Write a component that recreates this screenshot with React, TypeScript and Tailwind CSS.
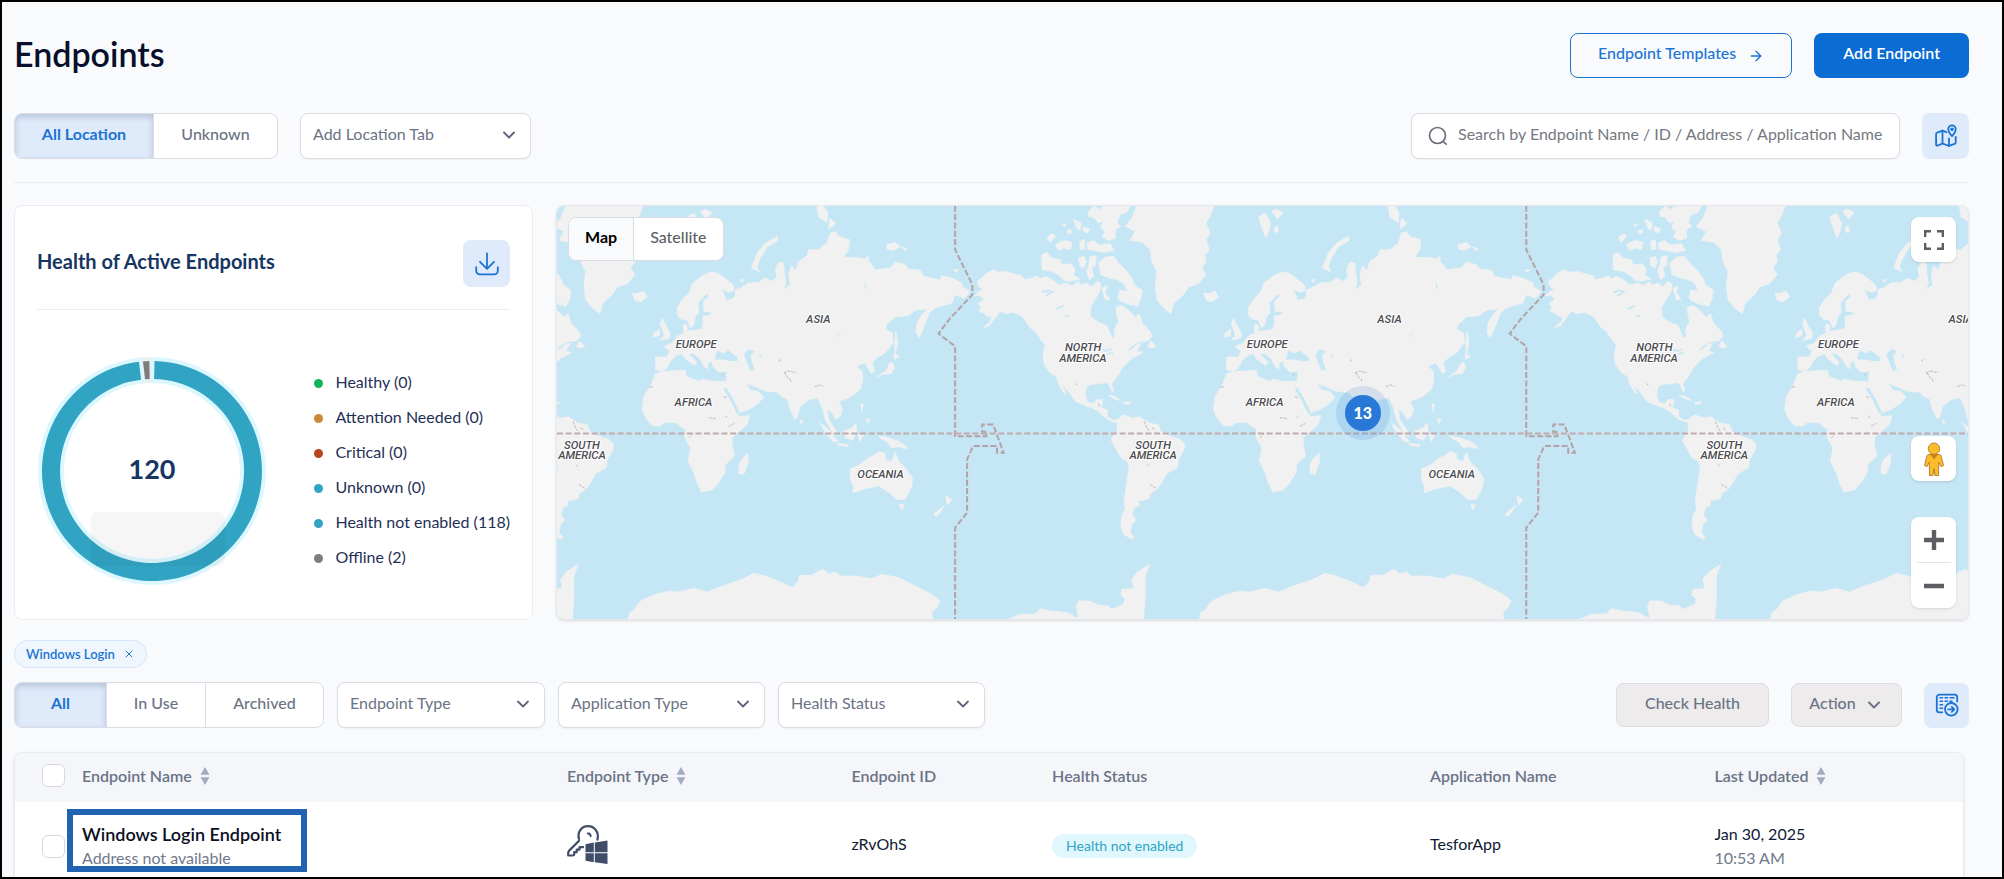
import React, { useState } from 'react';
import { ArrowRight, ChevronDown, X } from 'lucide-react';

interface HealthItem {
  label: string;
  count: number;
  dot: string;
}

interface Endpoint {
  name: string;
  address: string;
  endpointId: string;
  health: string;
  application: string;
  date: string;
  time: string;
}

const healthItems: HealthItem[] = [
  { label: 'Healthy', count: 0, dot: 'bg-[#12b35a]' },
  { label: 'Attention Needed', count: 0, dot: 'bg-[#cc8a37]' },
  { label: 'Critical', count: 0, dot: 'bg-[#b5451b]' },
  { label: 'Unknown', count: 0, dot: 'bg-[#31a4c4]' },
  { label: 'Health not enabled', count: 118, dot: 'bg-[#31a4c4]' },
  { label: 'Offline', count: 2, dot: 'bg-[#7d7d7d]' },
];

const endpoints: Endpoint[] = [
  {
    name: 'Windows Login Endpoint',
    address: 'Address not available',
    endpointId: 'zRvOhS',
    health: 'Health not enabled',
    application: 'TesforApp',
    date: 'Jan 30, 2025',
    time: '10:53 AM',
  },
];

/* ---------- icons ---------- */

const SearchIcon = () => (
  <svg className="h-5 w-5 shrink-0 text-[#6b6f7b]" viewBox="0 0 20 20" fill="none" stroke="currentColor" strokeWidth={1.7} strokeLinecap="round">
    <circle cx="9.5" cy="9.5" r="8" />
    <path d="M15.2 15.6l3 2.6" />
  </svg>
);

const MapPinIcon = () => (
  <svg className="h-6 w-6" viewBox="0 0 24 24" fill="none" stroke="currentColor" strokeWidth={1.8} strokeLinecap="round" strokeLinejoin="round">
    <path d="M12.5 8.2L8.5 6.7 3.2 8.6a1.6 1.6 0 0 0-1.1 1.5v10.6c0 .8.7 1.2 1.4.9l5-2.1 6.5 2.4 5.6-2a1.6 1.6 0 0 0 1.1-1.5v-5.6" />
    <path d="M8.5 6.7v12.8M15 14.5v7.4" />
    <path d="M18 1.3a3.7 3.7 0 0 0-3.7 3.7c0 3.2 3.7 7.2 3.7 7.2s3.7-4 3.7-7.2A3.7 3.7 0 0 0 18 1.3z" />
    <circle cx="18" cy="5.2" r="0.9" />
  </svg>
);

const DownloadIcon = () => (
  <svg className="h-6 w-6" viewBox="0 0 24 24" fill="none" stroke="currentColor" strokeWidth={1.8} strokeLinecap="round" strokeLinejoin="round">
    <path d="M12 1.5v15.2M5 9.8l7 7 7-7" />
    <path d="M1.2 15.2v3.6a3.6 3.6 0 0 0 3.6 3.6h14.4a3.6 3.6 0 0 0 3.6-3.6v-3.6" />
  </svg>
);

const TableExportIcon = () => (
  <svg className="h-6 w-6" viewBox="0 0 24 24" fill="none" stroke="currentColor" strokeLinecap="round" strokeLinejoin="round">
    <path strokeWidth={1.8} d="M7.2 19.3H4.4A2.6 2.6 0 0 1 1.8 16.7V4.3A2.6 2.6 0 0 1 4.4 1.7h15.2a2.6 2.6 0 0 1 2.6 2.6v4.2" />
    <path strokeWidth={1.4} strokeLinecap="butt" d="M4.5 4.8h3.6M9.5 4.8h3.6M14.5 4.8h5M4.5 8.3h3.6M9.5 8.3h3.6M14.5 8.3h3M4.5 11.8h3.6M4.5 15.3h3.6" />
    <circle cx="16.3" cy="16.3" r="6.3" strokeWidth={1.8} />
    <path strokeWidth={1.8} d="M13.2 16.3h6M16.8 13.8l2.5 2.5-2.5 2.5" />
  </svg>
);

const SortIcon = () => (
  <svg className="h-5 w-[10px]" viewBox="0 0 10 20" fill="#a3adc2">
    <path d="M5 1l4.5 7.8H.5z" />
    <path d="M5 19L.5 11.2h9z" />
  </svg>
);

const WindowsKeyIcon = () => (
  <svg className="h-[39px] w-[41px]" viewBox="0 0 41 39" fill="none">
    <path
      d="M12 15.8L2.2 25.6A3.6 3.6 0 0 0 1.2 28v2.5h4.7c.8 0 1.3-.5 1.3-1.3v-2h2.5v-2.6h2.8v-2.4h3.6M30.4 14.6c2-7.2-2.9-13.4-9.4-13.4-6.700 0-11 6.300-9 12.800"
      stroke="#3f4d68"
      strokeWidth={2.2}
      strokeLinecap="round"
      strokeLinejoin="round"
    />
    <path d="M20.5 7.5c2.2-.6 4.6 1.4 4 4-.3.9-1.5.9-1.7 0-.2-1.3-.8-1.9-2-2-1.2-.2-1.2-1.7-.3-2z" fill="#3f4d68" />
    <path d="M18.5 19.2l8.3-1.6v9.7h-8.3zM27.8 17.4L40.5 15.5v11.8H27.8zM18.5 28.2h8.3v9l-8.3-1.5zM27.8 28.2h12.7v10.8L27.8 37.3z" fill="#3f4d68" />
  </svg>
);

const PegmanIcon = () => (
  <svg className="h-[34px] w-5" viewBox="0 0 20 34" stroke="#b07a2c" strokeWidth={0.9}>
    <path d="M5 12.5h10c1.5 0 2 .8 2.3 2l2.2 9-2.5 1.2-2.2-4.5-.3 13.3H11l-1-7-1 7H5.5L5.2 20.2 3 24.7.5 23.5l2.2-9c.3-1.2.8-2 2.3-2z" fill="#fbbc2c" />
    <path d="M6 12.5h8l-4 5z" fill="#c98418" stroke="none" />
    <circle cx="10" cy="6.7" r="5.7" fill="#fbbc2c" />
  </svg>
);

/* ---------- small controls ---------- */

interface SegmentedProps {
  label: string;
  options: string[];
  widths: string[];
}

const Segmented: React.FC<SegmentedProps> = ({ label, options, widths }) => {
  const [active, setActive] = useState(options[0]);
  return (
    <div role="group" aria-label={label} className="flex h-[46px] overflow-hidden rounded-lg border border-[#d9dce4] bg-white">
      {options.map((option, index) => (
        <button
          key={option}
          onClick={() => setActive(option)}
          className={`border-r border-[#d9dce4] pb-1 last:border-r-0 ${widths[index]} ${
            option === active
              ? 'bg-[#dfebfb] font-bold text-[#1b74d4] shadow-[inset_0_3px_6px_rgba(30,50,80,0.22)]'
              : 'font-medium text-[#6b7385]'
          }`}
        >
          {option}
        </button>
      ))}
    </div>
  );
};

const Dropdown: React.FC<{ label: string; width: string }> = ({ label, width }) => (
  <div className={`relative ${width}`}>
    <select
      aria-label={label}
      className="h-[46px] w-full appearance-none rounded-lg border border-[#d9dce4] bg-white pr-10 pb-1 pl-3 text-[#6b7385] shadow-xs"
    >
      <option>{label}</option>
    </select>
    <ChevronDown className="pointer-events-none absolute top-3 right-3 h-5 w-5 text-[#5b6478]" strokeWidth={2.2} />
  </div>
);

/* ---------- donut ---------- */

const point = (radius: number, degrees: number) => {
  const angle = ((degrees - 90) * Math.PI) / 180;
  return `${(115 + radius * Math.cos(angle)).toFixed(2)} ${(115 + radius * Math.sin(angle)).toFixed(2)}`;
};

const arc = (start: number, end: number) => {
  const large = end - start > 180 ? 1 : 0;
  return `M${point(110, start)}A110 110 0 ${large} 1 ${point(110, end)}L${point(92, end)}A92 92 0 ${large} 0 ${point(92, start)}Z`;
};

const Donut = () => (
  <div className="relative h-[230px] w-[230px] shrink-0">
    <svg className="h-full w-full" viewBox="0 0 230 230" role="img" aria-label="118 health not enabled, 2 offline">
      <path d={arc(355, 358.6)} fill="#7d7d7d" stroke="#efefef" strokeWidth={8} paintOrder="stroke" />
      <path d={arc(1.3, 353.2)} fill="#31a4c4" stroke="#dcf7fe" strokeWidth={8} paintOrder="stroke" />
      <rect x="54" y="156" width="134" height="54" rx="6" fill="#000" fillOpacity={0.035} />
    </svg>
    <div className="absolute inset-0 flex items-center justify-center pb-1 text-[27px] font-bold text-[#163563]">120</div>
  </div>
);

/* ---------- world map ---------- */

const americas = [
  'M80 245L95 235 105 222 128 210 145 218 165 215 190 222 215 228 222 240 245 235 262 228 268 238 285 230 305 240 325 255 350 250 365 258 385 245 390 256 410 250 425 262 440 245 452 252 448 278 432 302 420 325 422 352 445 368 470 378 480 402 488 418 495 410 492 390 505 365 500 350 498 322 515 318 530 328 545 342 555 352 568 342 576 370 600 395 606 410 592 424 568 426 545 438 528 458 545 448 560 435 574 430 566 445 560 455 578 458 562 468 545 476 530 490 515 505 505 525 492 543 484 553 490 570 487 578 478 560 470 549 445 553 420 555 408 565 406 590 412 608 430 612 440 600 458 600 452 624 472 632 472 652 488 662 502 660 520 646 545 655 570 652 580 660 600 672 625 675 632 695 655 708 690 720 705 735 700 755 685 780 682 805 650 822 635 850 620 870 600 883 598 898 565 905 568 918 552 925 546 945 557 962 545 975 540 1000 552 1015 545 1020 520 1005 512 980 514 950 525 930 522 900 530 850 537 800 530 785 512 775 495 745 483 722 490 708 502 690 500 668 485 666 465 655 445 635 425 625 405 618 375 605 360 582 340 560 318 530 300 520 282 495 278 470 284 435 270 420 255 395 240 385 215 350 190 338 165 342 150 335 130 360 118 378 98 385 120 365 125 352 110 350 100 340 85 335 92 322 82 312 100 300 90 288 72 288 85 275 98 270 85 260Z',
  'M318 530L330 546 348 582 340 580 326 556Z',
  'M475 588L492 590 512 603 495 600Z',
  'M520 608L542 607 535 614 522 613Z',
  'M592 440L602 424 618 440 605 446Z',
  'M560 18L545 55 525 80 555 95 540 122 578 128 600 150 605 185 620 215 615 260 620 300 640 325 662 342 672 310 700 285 715 262 745 252 768 225 755 205 768 185 765 165 778 150 768 120 780 100 768 70 782 45 792 18Z',
  'M760 280L775 282 795 274 805 292 785 306 768 302Z',
  'M445 190L465 172 490 170 505 190 530 215 545 235 552 255 576 272 572 298 560 322 540 305 505 290 508 272 532 275 520 250 500 240 478 235 452 225Z',
  'M275 165L290 158 305 175 330 180 335 195 362 192 375 208 370 225 388 238 360 245 340 242 328 228 305 215 275 210Z',
  'M385 175L402 170 408 185 400 205 388 198ZM420 170L438 168 436 195 425 205 430 230 418 240 408 215 415 200Z',
  'M315 135L332 125 348 122 365 128 360 150 340 145 325 152ZM290 115L305 102 316 108 300 128Z',
  'M388 125L402 120 404 148 390 150ZM410 130L430 122 445 135 480 132 492 152 465 158 430 152 412 148Z',
  'M370 58L392 70 390 92 378 84ZM398 80L418 88 412 100 400 96ZM350 92L364 90 362 102 352 100ZM336 74L348 72 344 80Z',
  'M415 35L432 18 448 30 455 22 478 18 540 18 530 38 510 45 500 68 512 80 495 90 496 115 475 122 455 112 465 95 450 85 460 62 445 70 430 52 415 50Z',
  'M455 265L470 258 465 280 480 300 465 300ZM502 290L530 298 550 318 530 312 508 302Z',
  'M170 1262L210 1245 255 1244 270 1228 300 1235 350 1240 385 1258 378 1222 385 1205 420 1205 445 1218 470 1218 485 1230 520 1215 525 1200 512 1188 515 1170 550 1168 545 1140 560 1120 598 1095 585 1130 585 1200 580 1262Z',
  'M748 1262L752 1240 765 1232 785 1205 830 1185 870 1175 900 1178 945 1167 985 1178 1030 1160 1090 1140 1125 1122 1160 1130 1205 1148 1240 1165 1260 1145 1262 1128 1300 1128 1320 1115 1335 1110 1350 1124 1370 1118 1385 1130 1430 1130 1480 1138 1510 1125 1560 1135 1610 1160 1660 1185 1685 1205 1675 1225 1660 1240 1662 1262Z',
];

const eurasia = [
  'M-40 472L-5 472 2 455 -15 440 10 430 25 410 45 400 42 378 50 372 58 385 52 395 75 393 100 388 103 370 102 350 125 345 130 338 105 335 103 305 120 290 116 282 105 290 88 310 90 340 80 350 75 375 65 385 55 362 35 358 25 345 25 325 40 300 60 280 72 250 105 225 130 216 150 222 175 240 195 258 195 274 180 278 158 268 170 292 172 302 190 298 200 288 200 270 215 265 240 250 270 248 290 235 310 245 325 232 320 210 330 188 345 190 348 225 352 250 345 272 365 255 360 225 368 198 382 212 390 185 415 168 420 150 450 150 475 130 485 100 500 95 510 110 543 120 540 150 525 172 580 175 605 188 620 210 665 205 680 187 710 195 720 208 755 212 765 230 815 240 820 228 850 235 880 250 882 262 905 275 888 296 860 285 850 310 800 325 782 340 765 385 752 414 743 400 745 370 760 345 778 328 740 332 720 348 680 352 655 375 650 388 672 400 674 430 650 460 625 475 610 490 618 515 608 522 595 500 588 490 565 500 580 515 583 540 575 570 550 590 528 600 510 605 522 630 515 650 502 660 490 640 476 628 480 660 500 690 508 708 495 705 470 660 462 628 448 595 420 600 395 620 385 655 378 658 365 630 355 598 340 592 325 578 290 575 260 562 232 552 245 572 268 575 285 593 265 615 240 630 210 640 195 610 180 580 165 555 172 545 175 515 150 518 132 500 130 485 116 490 118 508 105 500 95 480 75 462 58 462 84 488 76 498 50 478 40 462 20 470 5 485 -5 505 -20 516 -40 510Z',
  'M-40 522L-10 515 50 512 52 530 90 545 100 538 130 545 168 545 172 565 185 595 205 635 210 652 243 648 235 675 215 692 190 715 190 735 197 770 170 795 168 820 150 850 130 872 98 878 85 850 75 820 58 785 65 745 48 715 50 690 35 680 20 668 -15 670 -25 680 -50 678 -70 655 -80 630 -75 590 -55 560Z',
  'M210 800L218 780 238 762 238 790 225 825 210 822Z',
  'M248 205L265 160 290 130 325 110 328 122 295 142 275 175 265 200 272 216Z',
  'M55 52L75 40 92 70 86 95 78 115 68 90ZM95 35L108 28 130 38 112 58ZM102 85L112 78 115 96 105 98Z',
  'M445 18L465 18 478 40 475 68 450 52ZM485 55L502 72 480 88Z',
  'M655 135L680 128 695 140 675 152 656 148ZM697 142L717 148 712 153Z',
  'M855 210L872 211 862 217ZM590 175L600 170 602 182 592 182ZM215 242L226 238 220 248Z',
  'M-20 355L-12 372 4 400 2 416 -26 422 -14 408 -20 388 -26 375ZM-46 402L-28 388 -28 408 -46 414Z',
  'M682 395L688 430 680 462 678 430ZM676 462L692 470 678 480ZM672 488L678 505 668 522 640 525 622 535 652 514 664 490Z',
  'M576 612L584 615 580 636ZM592 658L604 660 598 672ZM395 660L403 667 397 673Z',
  'M455 670L480 690 508 726 495 728 470 700ZM505 732L540 735 538 741 512 738ZM525 695L550 685 562 670 565 695 552 722 530 715ZM568 705L585 707 574 726Z',
  'M628 708L645 712 660 715 690 725 706 735 716 748 690 742 670 745 655 725 640 720Z',
  'M545 808L575 795 600 775 612 770 632 756 650 762 650 780 670 787 680 758 690 785 710 805 732 835 730 860 710 900 685 900 660 878 630 860 590 868 552 880 555 862 545 840Z',
  'M692 915L708 917 700 931ZM832 888L850 902 836 918ZM828 918L815 940 803 952 796 944Z',
];

const lakes = [
  'M226 465L240 448 258 455 246 468 250 490 258 510 245 514 235 490Z',
  'M138 480L145 453 165 462 178 452 207 474 206 484 185 484 160 480Z',
  'M503 415L524 388 510 410ZM586 245L594 262 590 270ZM270 470L280 462 278 472Z',
];

const borders =
  'M1215 520l15 -6 12 4 10 0M1218 520l8 14 8 4 2 8M1308 562l14 -6 12 4M1200 485l8 -6M1040 655l8 -8M990 655l20 2M1050 680l16 -8M1035 592l10 2M582 665l8 20 8 12M605 685l10 6M590 795l8 8M600 855l18 12M445 612l3 12M375 552l6 5M812 562l12 0M1028 523l6 4M930 715l12 -12';

const mapLabels = [
  { text: 'ASIA', x: 1319, y: 371 },
  { text: 'EUROPE', x: 952, y: 444 },
  { text: 'AFRICA', x: 944, y: 618 },
  { text: 'OCEANIA', x: 1506, y: 837 },
  { text: 'NORTH', x: 399, y: 454 },
  { text: 'AMERICA', x: 398, y: 488 },
  { text: 'SOUTH', x: 609, y: 749 },
  { text: 'AMERICA', x: 609, y: 780 },
];

// one world is 1716 units wide, it repeats to the left and right
const worldOffsets = [-1716, 0, 1716];
const mapLeft = -1182;
const mapRight = 3057;

const visibleLabels = worldOffsets
  .flatMap(offset => mapLabels.map(label => ({ ...label, x: label.x + offset })))
  .filter(label => label.x > mapLeft && label.x < mapRight);

const WorldMap = () => (
  <svg className="block h-full w-full bg-[#c5e6f4]" viewBox="-1182 18 4239 1242" preserveAspectRatio="xMidYMid slice" role="img" aria-label="World map">
    {worldOffsets.map(offset => (
      <g key={offset} transform={`translate(${offset} 0)`}>
        <g fill="#f1f1f1" stroke="#f1f1f1" strokeWidth={2} strokeLinejoin="round">
          {americas.map(d => (
            <path key={d} d={d} />
          ))}
          <g transform="translate(870 0)">
            {eurasia.map(d => (
              <path key={d} d={d} />
            ))}
          </g>
        </g>
        <g transform="translate(870 0)" fill="#c5e6f4">
          {lakes.map(d => (
            <path key={d} d={d} />
          ))}
          <path d="M168 566L190 602 208 640" fill="none" stroke="#c5e6f4" strokeWidth={9} />
        </g>
        <path d="M275 278l18 -6 14 4 -20 12M318 328l22 -10M345 350l12 -2M455 450l14 4 14 -6M470 465l18 -6" fill="none" stroke="#c5e6f4" strokeWidth={5} />
        <path d={borders} fill="none" stroke="#c4b6b8" strokeWidth={3} strokeDasharray="9 3" />
        <path d="M14 18V150L66 255V285L0 355L-36 402L14 440V710H108V697H95V675H128L160 760H140V740H68L50 780V940L14 985V1262" fill="none" stroke="#b3a3a8" strokeWidth={6} strokeDasharray="18 7" />
      </g>
    ))}
    <path d="M-1182 702H3057" stroke="#c4a9ac" strokeWidth={6} strokeDasharray="18 8" />
    <g
      className="fill-[#4c4c52] stroke-white stroke-[6px] font-['Roboto',sans-serif] text-[34px] font-medium italic"
      textAnchor="middle"
      paintOrder="stroke"
    >
      {visibleLabels.map(label => (
        <text key={`${label.text}-${label.x}-${label.y}`} x={label.x} y={label.y}>
          {label.text}
        </text>
      ))}
    </g>
  </svg>
);

const MapPanel = () => (
  <section aria-label="Endpoint map" className="relative h-[415px] min-w-0 flex-1 overflow-hidden rounded-lg border border-[#e6e8ee] shadow-sm">
    <WorldMap />
    <div className="absolute top-[11px] left-[11px] flex h-[44px] overflow-hidden rounded-lg border border-[#d9dce4] bg-white">
      <button className="border-r border-[#d9dce4] bg-[#f8fafc] px-4 pb-1 font-bold text-black">Map</button>
      <button className="px-4 pb-1 font-medium text-[#5c5f66]">Satellite</button>
    </div>
    <button
      aria-label="13 endpoints"
      className="absolute top-1/2 left-[57.1%] flex h-[54px] w-[54px] -translate-x-1/2 -translate-y-1/2 items-center justify-center rounded-full bg-[#2878d8]/15"
    >
      <span className="flex h-9 w-9 items-center justify-center rounded-full bg-[#2878d8] text-base font-black text-white">13</span>
    </button>
    <div className="absolute inset-y-[11px] right-3 flex w-[45px] flex-col items-center">
      <button aria-label="Full screen" className="flex h-[45px] w-full items-center justify-center rounded-lg bg-white shadow">
        <svg className="h-5 w-5" viewBox="0 0 20 20" fill="none" stroke="#5f5c63" strokeWidth={2.4}>
          <path d="M1.2 7V1.2H7M13 1.2h5.8V7M18.8 13v5.8H13M7 18.8H1.2V13" />
        </svg>
      </button>
      <button aria-label="Street view" className="mt-auto flex h-[45px] w-full items-center justify-center rounded-lg bg-white shadow">
        <PegmanIcon />
      </button>
      <div className="mt-9 flex h-[91px] w-full flex-col items-center rounded-lg bg-white shadow">
        <button aria-label="Zoom in" className="flex w-full flex-1 items-center justify-center">
          <svg className="h-5 w-5" viewBox="0 0 20 20" stroke="#5f5c63" strokeWidth={4.4}>
            <path d="M10 0v20M0 10h20" />
          </svg>
        </button>
        <span className="h-px w-[34px] bg-[#e4e4e4]" />
        <button aria-label="Zoom out" className="flex w-full flex-1 items-center justify-center">
          <svg className="h-5 w-5" viewBox="0 0 20 20" stroke="#5f5c63" strokeWidth={4.4}>
            <path d="M0 10h20" />
          </svg>
        </button>
      </div>
    </div>
  </section>
);

const Checkbox: React.FC<{ label: string }> = ({ label }) => (
  <input
    type="checkbox"
    aria-label={label}
    className="block h-[23px] w-[23px] appearance-none rounded-md border border-[#d5d8e2] bg-white checked:bg-[#1b74d4]"
  />
);

const App: React.FC = () => (
  <div className="h-screen overflow-hidden border-2 border-black bg-[#f9fafc] font-['Lato','Liberation_Sans',sans-serif] text-base leading-5 text-[#0f1a33]">
    <main className="pt-[31px] pr-[33px] pl-3">
      <header className="flex items-center justify-between">
        <h1 className="pb-1 text-[34px] leading-10 font-semibold text-[#070f2b]">Endpoints</h1>
        <div className="flex gap-[22px]">
          <a href="#templates" className="flex h-[45px] items-center gap-3 rounded-lg border border-[#1b74d4] px-[27px] font-medium text-[#1b74d4]">
            <span className="pb-1.5">Endpoint Templates</span>
            <ArrowRight className="h-4 w-4" />
          </a>
          <button className="h-[45px] rounded-lg bg-[#0b6cd3] px-[29px] pb-1.5 font-semibold text-white">Add Endpoint</button>
        </div>
      </header>

      <div className="mt-[35px] flex items-center">
        <Segmented label="Location" options={['All Location', 'Unknown']} widths={['w-[139px]', 'w-[123px]']} />
        <div className="ml-[22px]">
          <Dropdown label="Add Location Tab" width="w-[231px]" />
        </div>
        <label className="ml-auto flex h-[46px] w-[489px] items-center gap-[10px] rounded-lg border border-[#d9dce4] bg-white px-4 shadow-xs">
          <SearchIcon />
          <input
            type="text"
            aria-label="Search endpoints"
            placeholder="Search by Endpoint Name / ID / Address / Application Name"
            className="min-w-0 flex-1 pb-1 outline-none placeholder:text-[#74787f]"
          />
        </label>
        <button aria-label="Toggle map" className="ml-[22px] flex h-[46px] w-[47px] items-center justify-center rounded-lg bg-[#dfebfb] text-[#1b74d4]">
          <MapPinIcon />
        </button>
      </div>

      <hr className="mt-[23px] border-[#eaecf1]" />

      <div className="mt-[22px] flex gap-[23px]">
        <section className="flex w-[519px] flex-col rounded-lg border border-[#eaecf1] bg-white px-[22px] pt-[34px]">
          <div className="flex items-center justify-between border-b border-[#eaecf1] pb-[22px]">
            <h2 className="pb-1.5 text-xl font-bold text-[#163563]">Health of Active Endpoints</h2>
            <button aria-label="Download report" className="flex h-[47px] w-[47px] items-center justify-center rounded-lg bg-[#dfebfb] text-[#1b74d4]">
              <DownloadIcon />
            </button>
          </div>
          <div className="mt-[46px] flex items-start justify-between">
            <Donut />
            <ul className="mt-[10px] flex flex-col">
              {healthItems.map(item => (
                <li key={item.label} className="flex h-[35px] items-center gap-3 text-[#1f3055]">
                  <span className={`h-[9px] w-[9px] rounded-full ${item.dot}`} />
                  <span className="pb-1">
                    {item.label} ({item.count})
                  </span>
                </li>
              ))}
            </ul>
          </div>
        </section>
        <MapPanel />
      </div>

      <div className="mt-5 flex">
        <span className="flex h-7 items-center gap-2 rounded-full border border-[#d5e6fb] bg-[#eff6fe] px-[11px] text-[13px] font-semibold text-[#1b74d4]">
          Windows Login
          <button aria-label="Remove Windows Login filter">
            <X className="h-3 w-3" />
          </button>
        </span>
      </div>

      <div className="mt-[14px] flex items-center">
        <Segmented label="State" options={['All', 'In Use', 'Archived']} widths={['w-[92px]', 'w-[99px]', 'w-[117px]']} />
        <div className="ml-[13px] flex gap-[13px]">
          <Dropdown label="Endpoint Type" width="w-[208px]" />
          <Dropdown label="Application Type" width="w-[207px]" />
          <Dropdown label="Health Status" width="w-[207px]" />
        </div>
        <div className="ml-auto flex items-center gap-[22px]">
          <button className="h-[44px] w-[153px] rounded-lg border border-[#d9dce4] bg-[#edebec] pb-1 font-medium text-[#6b7385]">Check Health</button>
          <button className="flex h-[44px] w-[111px] items-center justify-center gap-2 rounded-lg border border-[#d9dce4] bg-[#edebec] font-medium text-[#6b7385]">
            <span className="pb-1">Action</span>
            <ChevronDown className="h-5 w-5" strokeWidth={2.4} />
          </button>
          <button aria-label="Customize columns" className="flex h-[45px] w-[45px] items-center justify-center rounded-lg bg-[#dfebfb] text-[#1b74d4]">
            <TableExportIcon />
          </button>
        </div>
      </div>

      <div className="mt-6 mr-[5px] overflow-hidden rounded-lg border border-[#e8eaf0] bg-white shadow-sm">
        <table className="w-full table-fixed text-left">
          <colgroup>
            <col className="w-[67px]" />
            <col className="w-[24.9%]" />
            <col className="w-[14.6%]" />
            <col className="w-[10.3%]" />
            <col className="w-[19.4%]" />
            <col className="w-[14.6%]" />
            <col />
          </colgroup>
          <thead>
            <tr className="h-[49px] bg-[#f4f6fa] text-[#6b7385] *:pb-1 *:font-semibold">
              <th className="pl-[27px]">
                <Checkbox label="Select all endpoints" />
              </th>
              <th>
                <button className="flex items-center gap-2">
                  Endpoint Name <SortIcon />
                </button>
              </th>
              <th>
                <button className="flex items-center gap-2">
                  Endpoint Type <SortIcon />
                </button>
              </th>
              <th>Endpoint ID</th>
              <th>Health Status</th>
              <th>Application Name</th>
              <th>
                <button className="flex items-center gap-2">
                  Last Updated <SortIcon />
                </button>
              </th>
            </tr>
          </thead>
          <tbody>
            {endpoints.map(endpoint => (
              <tr key={endpoint.endpointId} className="h-[88px]">
                <td className="pl-[27px]">
                  <Checkbox label={`Select ${endpoint.name}`} />
                </td>
                <td className="relative pb-1">
                  <a href="#endpoint" className="block text-lg leading-7 font-semibold text-[#0a0f24]">
                    {endpoint.name}
                  </a>
                  <p className="text-[#70798b]">{endpoint.address}</p>
                  <span className="pointer-events-none absolute top-[7px] -left-[15px] h-[63px] w-60 border-[6px] border-[#2163b0]" />
                </td>
                <td className="pb-1">
                  <WindowsKeyIcon />
                </td>
                <td className="pb-1">{endpoint.endpointId}</td>
                <td>
                  <span className="inline-block rounded-full bg-[#e0f7fd] px-[14px] py-[2px] text-sm leading-5 text-[#31a4c4]">{endpoint.health}</span>
                </td>
                <td className="pb-1">{endpoint.application}</td>
                <td className="pb-1">
                  <p className="leading-7">{endpoint.date}</p>
                  <p className="text-[#70798b]">{endpoint.time}</p>
                </td>
              </tr>
            ))}
          </tbody>
        </table>
      </div>
    </main>
  </div>
);

export default App;
